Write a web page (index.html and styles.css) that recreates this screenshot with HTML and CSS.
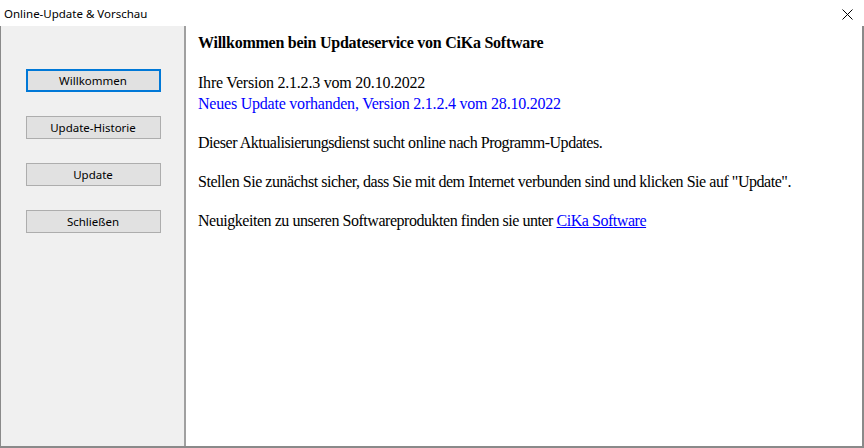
FILE: index.html
```html
<!DOCTYPE html>
<html lang="de">
<head>
    <meta charset="UTF-8">
    <meta name="viewport" content="width=device-width, initial-scale=1.0">
    <title>Online-Update &amp; Vorschau</title>
    <link rel="stylesheet" href="styles.css">
</head>
<body>
    <div class="window">
        <div class="titlebar">
            <span class="title">Online-Update &amp; Vorschau</span>
            <span class="close">
                <svg width="11" height="11" viewBox="0 0 11 11">
                    <path d="M0.5 0.5 L10.5 10.5 M10.5 0.5 L0.5 10.5" stroke="#000" stroke-width="1"/>
                </svg>
            </span>
        </div>

        <div class="client">
            <div class="sidebar">
                <button class="btn active">Willkommen</button>
                <button class="btn">Update-Historie</button>
                <button class="btn">Update</button>
                <button class="btn">Schließen</button>
            </div>

            <div class="content">
                <h1>Willkommen bein Updateservice von CiKa Software</h1>
                <p class="version">Ihre Version 2.1.2.3 vom 20.10.2022<br>
                <span class="new">Neues Update vorhanden, Version 2.1.2.4 vom 28.10.2022</span></p>
                <p>Dieser Aktualisierungsdienst sucht online nach Programm-Updates.</p>
                <p>Stellen Sie zunächst sicher, dass Sie mit dem Internet verbunden sind und klicken Sie auf "Update".</p>
                <p>Neuigkeiten zu unseren Softwareprodukten finden sie unter <a href="#">CiKa Software</a></p>
            </div>
        </div>
    </div>
</body>
</html>
```

FILE: styles.css
```css
html, body {
    margin: 0;
    padding: 0;
    background-color: #ffffff;
}

.window {
    width: 864px;
    height: 448px;
    display: flex;
    flex-direction: column;
    box-sizing: border-box;
    font-family: "Noto Sans", "Open Sans", sans-serif;
}

.titlebar {
    height: 26px;
    display: flex;
    align-items: center;
    justify-content: space-between;
    background-color: #ffffff;
    flex: none;
}

.title {
    font-size: 11.5px;
    color: #000;
    padding-left: 4px;
}

.close {
    display: flex;
    width: 11px;
    height: 11px;
    margin-right: 11px;
    margin-top: 2px;
}

.client {
    flex: 1;
    display: flex;
    border-left: 1px solid #8a8a8a;
    border-right: 2px solid #8a8a8a;
    border-bottom: 2px solid #8a8a8a;
}

.sidebar {
    width: 183px;
    flex: none;
    background-color: #f0f0f0;
    border-right: 2px solid #a0a0a0;
    display: flex;
    flex-direction: column;
    align-items: center;
    padding-top: 43px;
    gap: 24px;
}

.btn {
    width: 135px;
    height: 23px;
    margin-left: 1px;
    background-color: #e1e1e1;
    border: 1px solid #adadad;
    font-family: "Noto Sans", "Open Sans", sans-serif;
    font-size: 11.5px;
    color: #000;
    padding: 0;
    line-height: 20px;
}

.btn.active {
    border: 2px solid #0078d7;
}

.content {
    flex: 1;
    padding: 7px 12px 0 12px;
    font-family: "Liberation Serif", "Times New Roman", serif;
    font-size: 16px;
    line-height: 20px;
    letter-spacing: -0.46px;
    color: #000;
}

.content h1 {
    font-size: 16px;
    font-weight: bold;
    margin: 0 0 20px 0;
    line-height: 20px;
    letter-spacing: -0.25px;
}

.content p {
    margin: 0 0 19px 0;
}

.content p.version {
    letter-spacing: -0.22px;
}

.content .new {
    color: #0000ff;
    line-height: 21px;
}

.content a {
    color: #0000ff;
}
```
